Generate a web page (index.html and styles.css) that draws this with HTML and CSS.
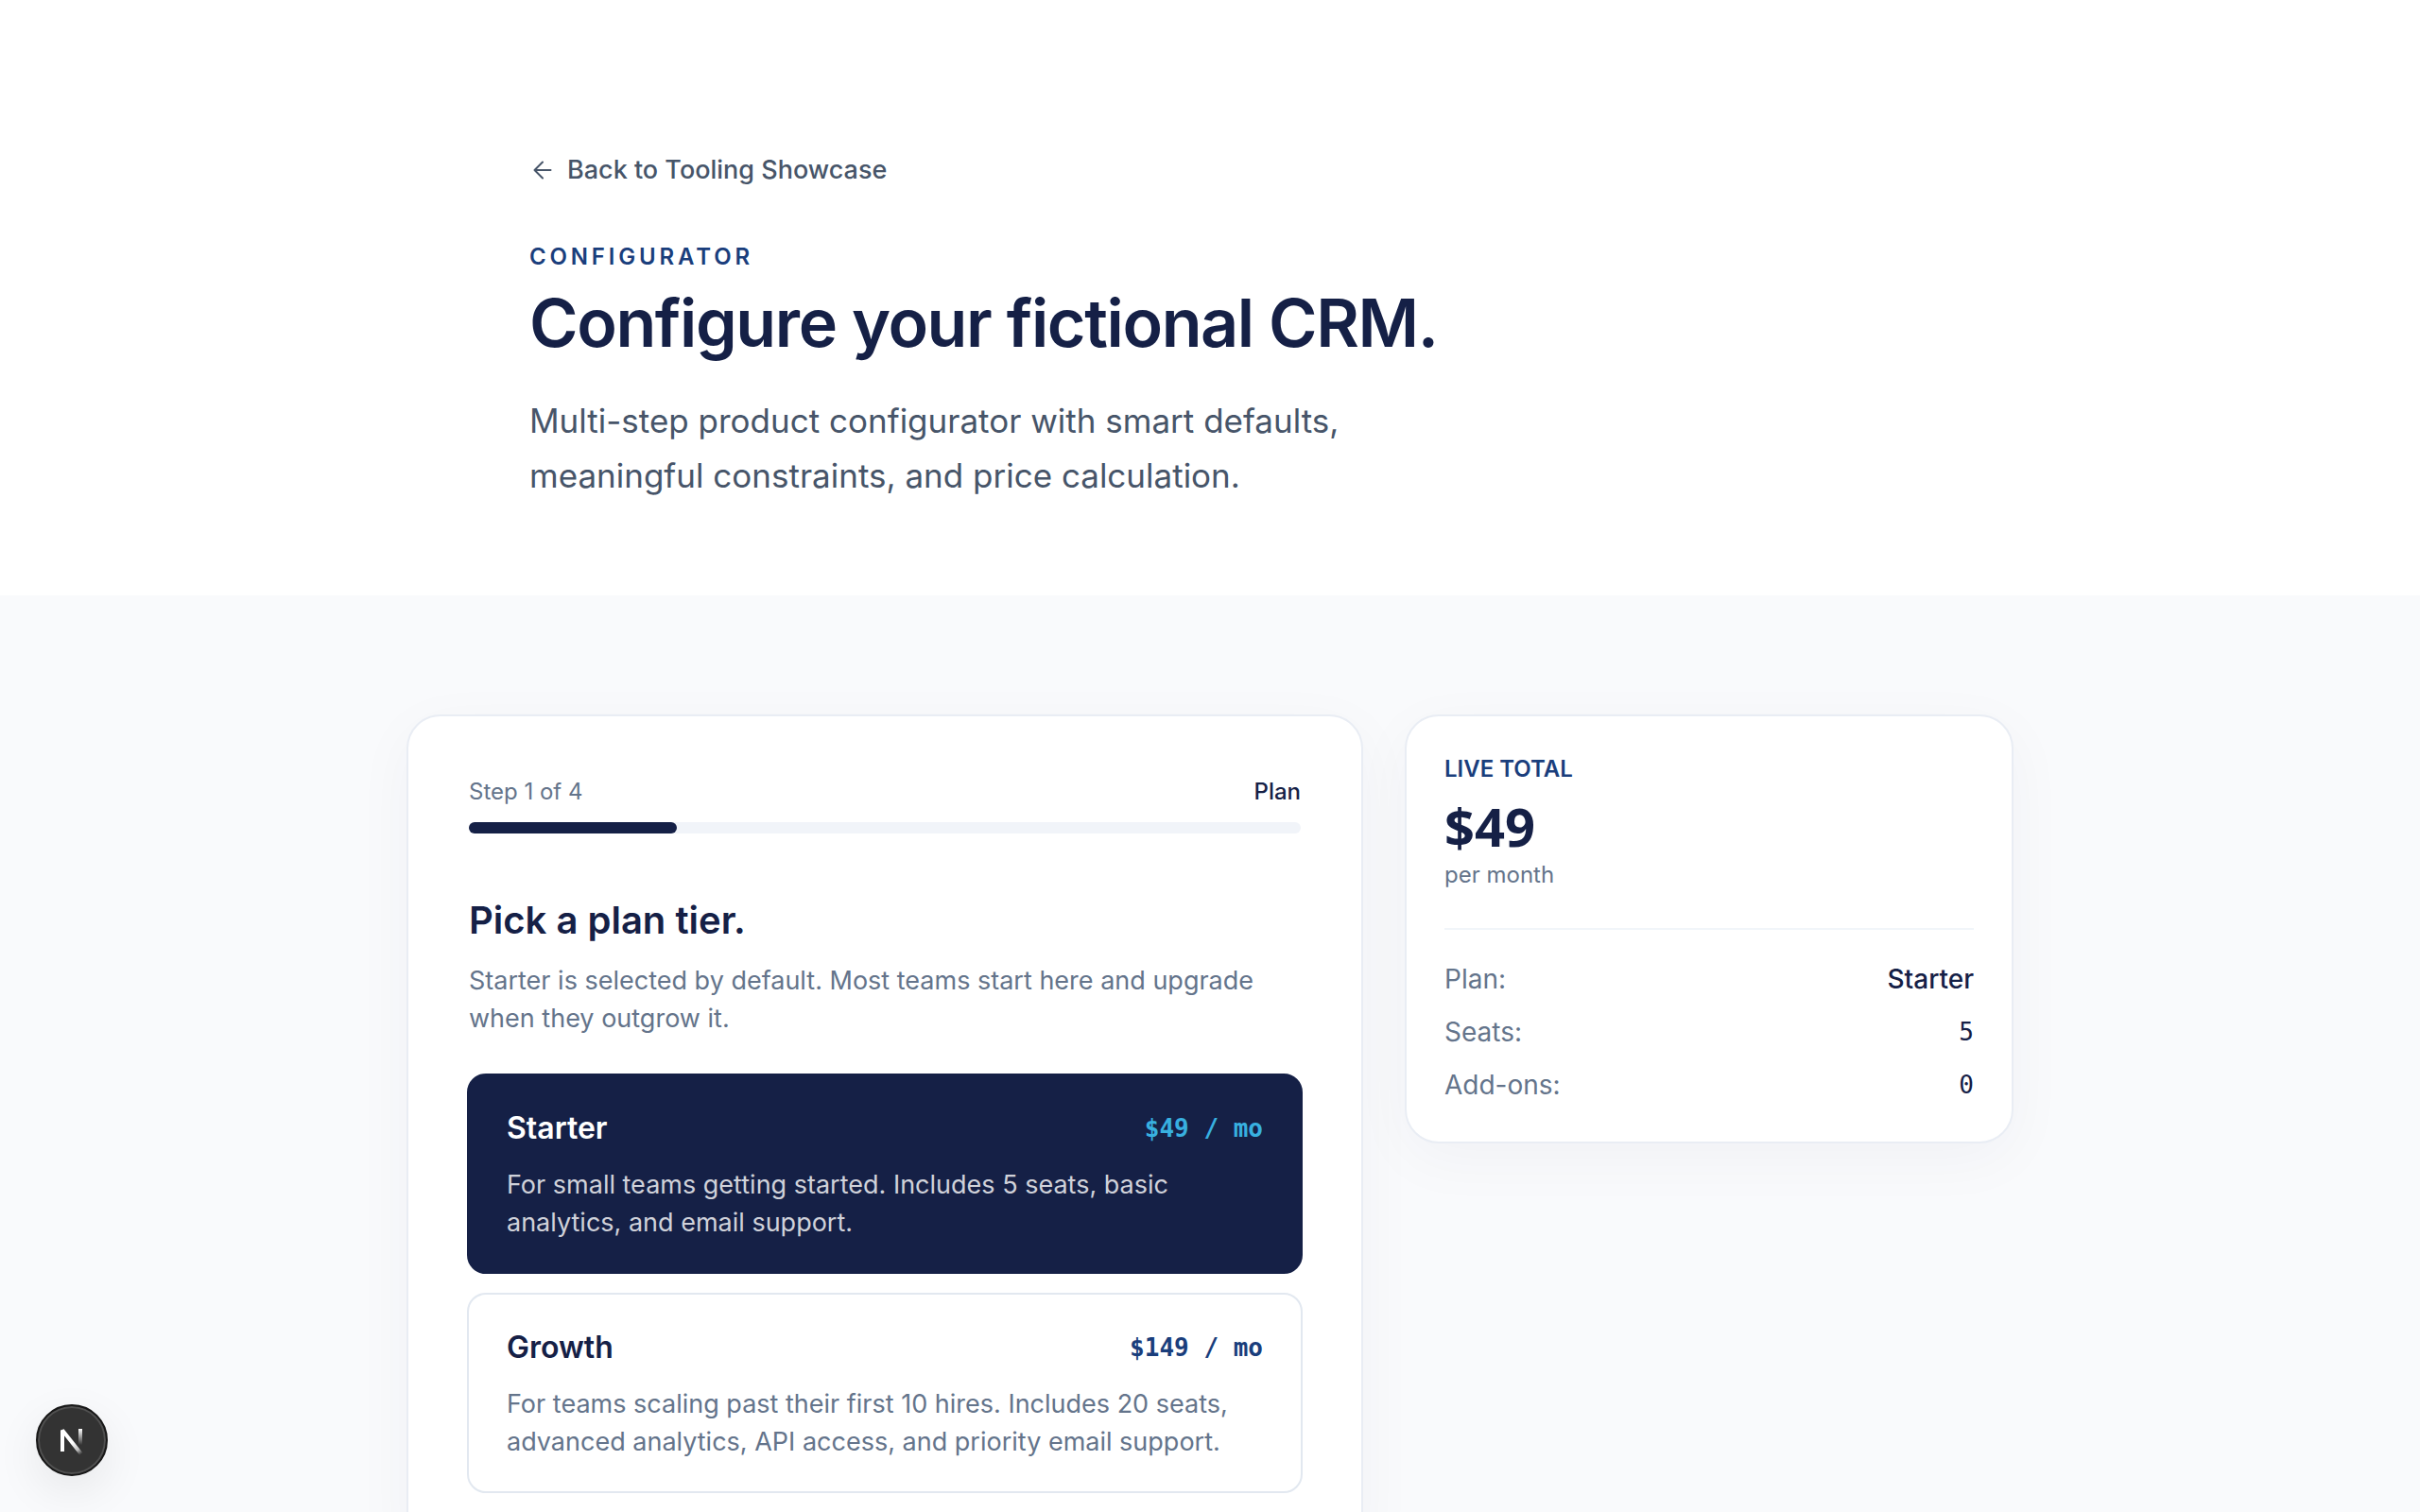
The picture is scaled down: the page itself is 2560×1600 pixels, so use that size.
FILE: index.html
```
<!DOCTYPE html>
<html lang="en">
<head>
    <meta charset="UTF-8">
    <title>Configurator</title>
    <link rel="stylesheet" href="styles.css">
</head>
<body>
    <header class="hero">
        <div class="hero-inner">
            <a href="#" class="back-link">
                <svg class="back-icon" viewBox="0 0 28 28" fill="none" stroke="currentColor" stroke-width="2" stroke-linecap="round" stroke-linejoin="round" aria-hidden="true">
                    <path d="M14 22.500L5.500 14L14 5.500M22.500 14H5.500"/>
                </svg>
                Back to Tooling Showcase
            </a>
            <p class="eyebrow">Configurator</p>
            <h1>Configure your fictional CRM.</h1>
            <p class="lead">Multi-step product configurator with smart defaults, meaningful constraints, and price calculation.</p>
        </div>
    </header>

    <main class="configurator">
        <div class="grid">
            <form class="card steps">
                <div class="step-head">
                    <span>Step 1 of 4</span>
                    <span class="step-name">Plan</span>
                </div>
                <div class="progress">
                    <div class="progress-bar" style="width: 25%"></div>
                </div>

                <h2>Pick a plan tier.</h2>
                <p class="step-text">Starter is selected by default. Most teams start here and upgrade when they outgrow it.</p>

                <div class="options" role="radiogroup" aria-label="Plan tier">
                    <label class="option">
                        <input type="radio" name="plan" value="starter" checked>
                        <span class="option-head">
                            <span class="option-name">Starter</span>
                            <span class="option-price">$49 / mo</span>
                        </span>
                        <span class="option-text">For small teams getting started. Includes 5 seats, basic analytics, and email support.</span>
                    </label>
                    <label class="option">
                        <input type="radio" name="plan" value="growth">
                        <span class="option-head">
                            <span class="option-name">Growth</span>
                            <span class="option-price">$149 / mo</span>
                        </span>
                        <span class="option-text">For teams scaling past their first 10 hires. Includes 20 seats, advanced analytics, API access, and priority email support.</span>
                    </label>
                </div>
            </form>

            <aside class="card total">
                <p class="total-label">Live total</p>
                <p class="total-price">$49</p>
                <p class="total-period">per month</p>
                <dl class="summary">
                    <div class="summary-row"><dt>Plan:</dt><dd class="plan-name">Starter</dd></div>
                    <div class="summary-row"><dt>Seats:</dt><dd>5</dd></div>
                    <div class="summary-row"><dt>Add-ons:</dt><dd>0</dd></div>
                </dl>
            </aside>
        </div>
    </main>

    <button type="button" class="dev-button" aria-label="Open dev tools">
        <svg viewBox="0 0 40 40" fill="none" aria-hidden="true">
            <defs>
                <linearGradient id="fade-diagonal" x1="22" y1="22" x2="31" y2="34" gradientUnits="userSpaceOnUse">
                    <stop stop-color="#fff"/>
                    <stop offset="0.6" stop-color="#fff" stop-opacity="0.7"/>
                    <stop offset="1" stop-color="#fff" stop-opacity="0"/>
                </linearGradient>
                <linearGradient id="fade-stem" x1="28" y1="8" x2="28" y2="25" gradientUnits="userSpaceOnUse">
                    <stop stop-color="#fff"/>
                    <stop offset="1" stop-color="#fff" stop-opacity="0"/>
                </linearGradient>
            </defs>
            <path d="M10 32V9.500L31 36" stroke="url(#fade-diagonal)" stroke-width="4" stroke-linejoin="bevel"/>
            <path d="M29 8V26" stroke="url(#fade-stem)" stroke-width="4"/>
        </svg>
    </button>
</body>
</html>
```
FILE: styles.css
```
* {
    box-sizing: border-box;
}

body {
    font-family: Inter, sans-serif;
    font-size: 27px;
    line-height: 40px;
    color: #152046;
    background-color: #f9fafc;
    margin: 0;
}

h1,
h2,
p,
dl,
dd {
    margin: 0;
}

.hero {
    background-color: #fff;
    padding: 160px 0 98px;
}

.hero-inner {
    max-width: 1440px;
    margin: 0 auto;
}

.back-link {
    display: flex;
    align-items: center;
    gap: 12px;
    width: fit-content;
    font-weight: 500;
    color: #475569;
    text-decoration: none;
}

.back-icon {
    width: 28px;
    height: 28px;
}

.eyebrow {
    margin-top: 56px;
    font-size: 24px;
    line-height: 32px;
    font-weight: 600;
    letter-spacing: 0.16em;
    text-transform: uppercase;
    color: #1a3e7c;
}

h1 {
    margin-top: 16px;
    font-size: 70px;
    line-height: 76px;
    font-weight: 600;
    letter-spacing: -0.02em;
}

.lead {
    max-width: 960px;
    margin-top: 36px;
    font-size: 35px;
    line-height: 58px;
    color: #475569;
}

.configurator {
    padding: 126px 0;
}

.grid {
    display: grid;
    grid-template-columns: 11fr 7fr;
    gap: 44px;
    align-items: start;
    max-width: 1700px;
    margin: 0 auto;
}

.card {
    background-color: #fff;
    border: 2px solid #e9edf4;
    border-radius: 36px;
    box-shadow: 0 16px 64px rgba(21, 32, 70, 0.04);
}

.steps {
    padding: 64px;
}

.step-head {
    display: flex;
    justify-content: space-between;
    font-size: 24px;
    line-height: 32px;
    color: #64748b;
}

.step-name {
    font-weight: 500;
    color: #152046;
}

.progress {
    height: 12px;
    margin-top: 16px;
    border-radius: 6px;
    background-color: #f1f4f9;
}

.progress-bar {
    height: 100%;
    border-radius: 6px;
    background-color: #152046;
}

h2 {
    margin-top: 68px;
    font-size: 40px;
    line-height: 48px;
    font-weight: 600;
}

.step-text {
    margin-top: 20px;
    color: #64748b;
}

.options {
    display: grid;
    gap: 20px;
    margin: 38px -2px 0;
}

.option {
    position: relative;
    padding: 36px 40px 32px;
    border: 2px solid #e2e8f0;
    border-radius: 20px;
    cursor: pointer;
}

/* the whole row is the control */
.option input {
    position: absolute;
    opacity: 0;
}

.option-head {
    display: flex;
    justify-content: space-between;
    align-items: center;
}

.option-name {
    font-size: 32px;
    font-weight: 600;
}

.option-price {
    font-family: "DejaVu Sans Mono", monospace;
    font-size: 26px;
    font-weight: 700;
    color: #1a3e7c;
}

.option-text {
    display: block;
    margin-top: 20px;
    color: #64748b;
}

.option:has(input:checked) {
    background-color: #152046;
    border-color: #152046;
    color: #fff;
}

.option:has(input:checked) .option-price {
    color: #38b0e0;
}

.option:has(input:checked) .option-text {
    color: #d0d2da;
}

.total {
    padding: 40px;
}

.total-label {
    font-size: 24px;
    line-height: 32px;
    font-weight: 600;
    text-transform: uppercase;
    color: #1a3e7c;
}

.total-price {
    margin-top: 12px;
    font-family: "Noto Sans", sans-serif;
    font-size: 56px;
    line-height: 64px;
    font-weight: 700;
}

.total-period {
    margin-top: 4px;
    font-size: 24px;
    line-height: 32px;
    color: #64748b;
}

.summary {
    display: grid;
    gap: 16px;
    margin-top: 40px;
    padding-top: 32px;
    border-top: 2px solid #f1f5f9;
    font-size: 28px;
}

.summary-row {
    display: flex;
    justify-content: space-between;
}

.summary-row dt {
    color: #64748b;
}

.summary-row dd {
    font-family: "DejaVu Sans Mono", monospace;
    font-size: 26px;
}

.summary-row .plan-name {
    font-family: inherit;
    font-size: inherit;
    font-weight: 500;
}

.dev-button {
    position: fixed;
    left: 38px;
    bottom: 38px;
    width: 76px;
    height: 76px;
    display: grid;
    place-items: center;
    padding: 0;
    border: 2px solid #171717;
    border-radius: 50%;
    background-color: #333;
    box-shadow: inset 0 0 0 2px #505050, 0 16px 48px rgba(0, 0, 0, 0.08);
}

.dev-button svg {
    width: 40px;
    height: 40px;
}
```
